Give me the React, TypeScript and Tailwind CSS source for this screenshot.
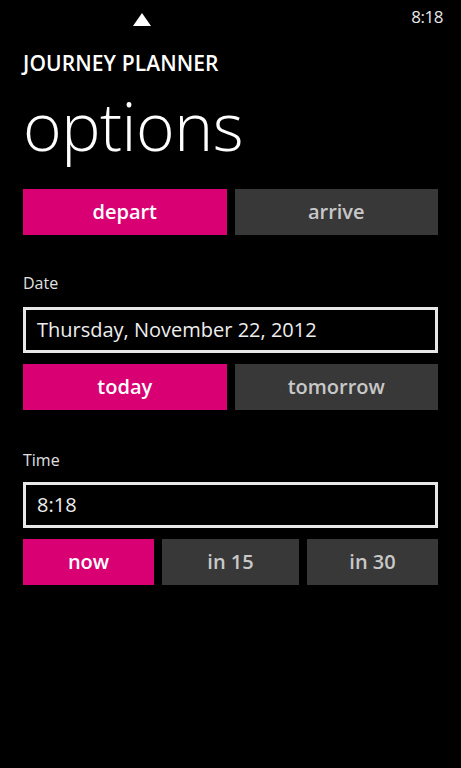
export default function App() {
  return (
    <div className="w-[461px] h-[768px] bg-black text-white overflow-hidden" style={{ fontFamily: '"Open Sans", "Noto Sans", sans-serif' }}>
      {/* status bar */}
      <div className="relative h-[32px]">
        <div className="absolute left-[133px] top-[13px] w-0 h-0 border-l-[9px] border-r-[9px] border-b-[13px] border-l-transparent border-r-transparent border-b-white" />
        <span className="absolute right-[18px] top-[4px] text-[17px] tracking-[-0.5px] text-[#e6e6e6]">8:18</span>
      </div>

      <div className="px-[23px]">
        <h2 className="mt-[17px] text-[21px] font-semibold leading-[28px] tracking-[0.1px]">JOURNEY PLANNER</h2>
        <h1 className="mt-[8px] text-[66px] font-light leading-[80px] tracking-[-0.5px]">options</h1>

        <div className="mt-[24px] grid grid-cols-2 gap-[8px]">
          <Btn label="depart" active />
          <Btn label="arrive" />
        </div>

        <p className="mt-[36px] text-[16px] text-[#e0e0e0] leading-[24px]">Date</p>
        <Field value="Thursday, November 22, 2012" className="mt-[12px]" />
        <div className="mt-[11px] grid grid-cols-2 gap-[8px]">
          <Btn label="today" active />
          <Btn label="tomorrow" />
        </div>

        <p className="mt-[38px] text-[16px] text-[#e0e0e0] leading-[24px]">Time</p>
        <Field value="8:18" className="mt-[10px]" />
        <div className="mt-[11px] grid grid-cols-[131px_137px_131px] gap-[8px]">
          <Btn label="now" active />
          <Btn label="in 15" />
          <Btn label="in 30" />
        </div>
      </div>
    </div>
  );
}

function Btn({ label, active }: { label: string; active?: boolean }) {
  return (
    <div
      className={`h-[46px] flex items-center justify-center text-[20px] font-semibold ${
        active ? 'bg-[#d80073] text-white' : 'bg-[#383838] text-[#c8c8c8]'
      }`}
    >
      {label}
    </div>
  );
}

function Field({ value, className }: { value: string; className?: string }) {
  return (
    <div className={`h-[46px] border-[3px] border-[#e8e8e8] flex items-center px-[11px] text-[20px] text-[#eeeeee] ${className ?? ''}`}>
      {value}
    </div>
  );
}
